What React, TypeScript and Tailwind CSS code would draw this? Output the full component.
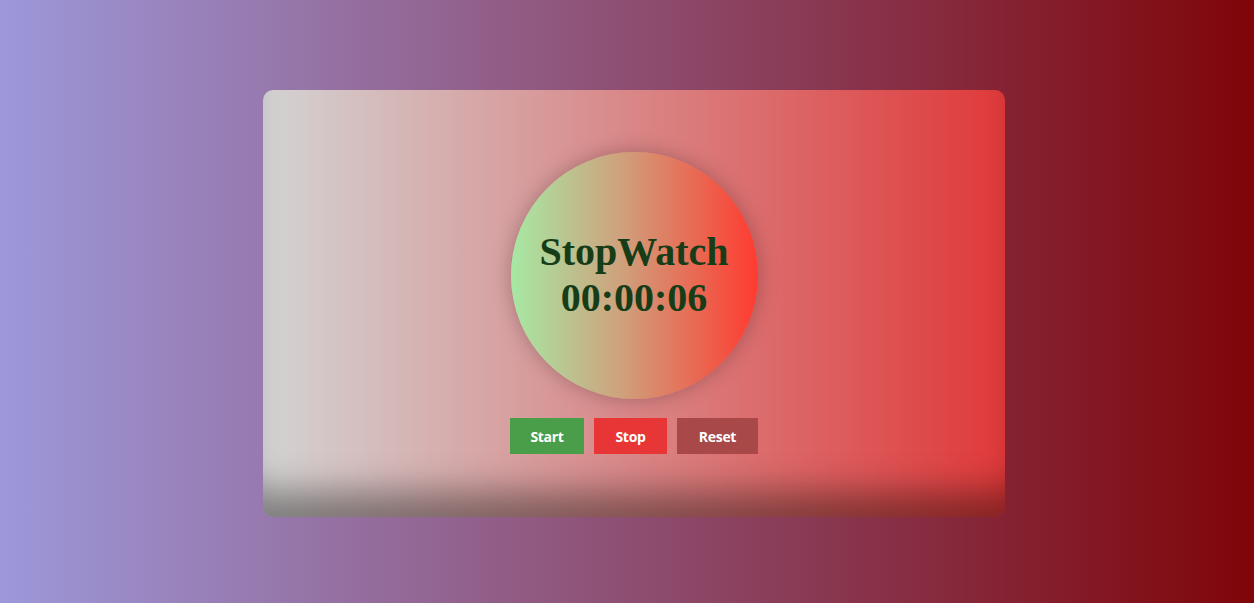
import React, { useEffect, useRef, useState } from "react";

const pad = (n: number) => String(n).padStart(2, "0");

export default function App() {
  const [seconds, setSeconds] = useState(6);
  const [running, setRunning] = useState(false);
  const timer = useRef<number | null>(null);

  useEffect(() => {
    if (!running) return;
    timer.current = window.setInterval(() => setSeconds((s) => s + 1), 1000);
    return () => {
      if (timer.current) window.clearInterval(timer.current);
    };
  }, [running]);

  const h = Math.floor(seconds / 3600);
  const m = Math.floor((seconds % 3600) / 60);
  const s = seconds % 60;

  return (
    <div className="flex h-[603px] w-full items-center justify-center bg-[linear-gradient(to_right,#9d98da,#7f0509)] pl-[14px] pt-[4px]">
      <div className="flex h-[427px] w-[742px] flex-col items-center rounded-[10px] bg-[linear-gradient(to_right,#d3d3d3,#e0393a)] pt-[62px] shadow-[inset_0_-45px_35px_-20px_rgba(0,0,0,0.4)]">
        <div className="flex h-[247px] w-[247px] flex-col items-center justify-center rounded-full bg-[linear-gradient(to_right,#a6e9a4,#cfa07c_45%,#ff3a30)] pb-[2px] font-['Liberation_Serif',serif] text-[40px] font-bold leading-[46px] text-[#173d18] shadow-[0_0_20px_rgba(0,0,0,0.25)]">
          <div>StopWatch</div>
          <div>
            {pad(h)}:{pad(m)}:{pad(s)}
          </div>
        </div>
        <div className="mt-[19px] flex gap-[10px] font-['Open_Sans',sans-serif] text-[14px] font-bold tracking-[-0.3px] text-white">
          <button onClick={() => setRunning(true)} className="h-[36px] w-[74px] bg-[#4a9e4a]">
            Start
          </button>
          <button onClick={() => setRunning(false)} className="h-[36px] w-[73px] bg-[#e83535]">
            Stop
          </button>
          <button
            onClick={() => {
              setRunning(false);
              setSeconds(0);
            }}
            className="h-[36px] w-[81px] bg-[#a84848]"
          >
            Reset
          </button>
        </div>
      </div>
    </div>
  );
}
